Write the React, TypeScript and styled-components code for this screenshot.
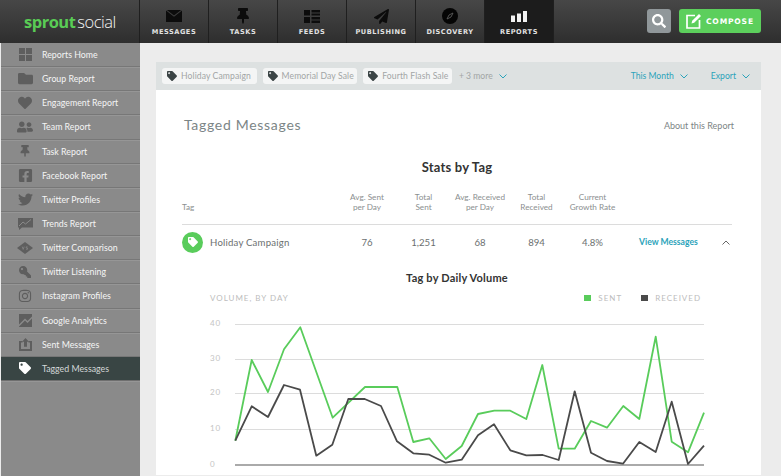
import { ReactNode } from "react";
import styled, { createGlobalStyle } from "styled-components";
import {
  FaFolder,
  FaHeart,
  FaUserFriends,
  FaThumbtack,
  FaFacebookSquare,
  FaTwitter,
  FaKey,
  FaInstagram,
  FaTag,
  FaPaperPlane,
  FaSearch,
} from "react-icons/fa";

const GlobalStyle = createGlobalStyle`
  html, body {
    margin: 0;
    padding: 0;
    background: #ececec;
    overflow: hidden;
  }
  * { box-sizing: border-box; }
`;

const Page = styled.div`
  width: 781px;
  height: 476px;
  display: flex;
  flex-direction: column;
  overflow: hidden;
  background: #ececec;
  font-family: Lato, "Liberation Sans", sans-serif;
`;

/* ---------- top bar ---------- */
const TopBar = styled.header`
  flex: 0 0 43px;
  display: flex;
  align-items: stretch;
  background: linear-gradient(#474747, #2e2e2e);
`;

const Logo = styled.div`
  width: 140px;
  padding: 0 0 1px 24px;
  display: flex;
  align-items: center;
  font-family: "Open Sans", sans-serif;
  font-size: 16.5px;
  letter-spacing: -0.5px;
  color: #f4f4f4;
  font-weight: 300;
  border-right: 1px solid #1f1f1f;
  b {
    color: #59cc55;
    font-weight: 700;
    margin-right: 2px;
  }
`;

const NavItem = styled.div<{ $active?: boolean }>`
  width: 69px;
  display: flex;
  flex-direction: column;
  align-items: center;
  gap: 3px;
  padding-top: 7px;
  border-right: 1px solid #1f1f1f;
  background: ${(p) => (p.$active ? "#1c1c1c" : "transparent")};
  color: #0c0c0c;
`;

const NavIcon = styled.span`
  height: 18px;
  display: flex;
  align-items: center;
  svg { display: block; }
`;

const NavLabel = styled.span`
  font-family: "DejaVu Sans", sans-serif;
  font-weight: 700;
  font-size: 6.6px;
  line-height: 8px;
  letter-spacing: 0.55px;
  color: #e2e2e2;
`;

const TopActions = styled.div`
  margin-left: auto;
  padding: 9px 20px 0 0;
  display: flex;
  align-items: flex-start;
  gap: 8px;
`;

const SearchButton = styled.div`
  width: 24px;
  height: 24px;
  border-radius: 3px;
  background: #90979a;
  color: #fff;
  display: flex;
  align-items: center;
  justify-content: center;
`;

const ComposeButton = styled.div`
  width: 82px;
  height: 24px;
  border-radius: 3px;
  background: #5ccf5c;
  color: #fff;
  display: flex;
  align-items: center;
  gap: 4px;
  padding-left: 7px;
  font-family: "DejaVu Sans", sans-serif;
  font-weight: 700;
  font-size: 7.6px;
  letter-spacing: 0.8px;
`;

/* ---------- sidebar ---------- */
const Body = styled.div`
  flex: 1;
  display: flex;
  min-height: 0;
`;

const Sidebar = styled.nav`
  width: 139px;
  margin-left: 1px;
  background: #8a8a8a;
  display: grid;
  grid-auto-rows: 24.15px;
`;

const SideRow = styled.div<{ $active?: boolean }>`
  display: flex;
  align-items: center;
  padding-left: 15px;
  gap: 8px;
  font-size: 8.8px;
  color: ${(p) => (p.$active ? "#d4d8d8" : "#f5f5f5")};
  background: ${(p) => (p.$active ? "#394544" : "transparent")};
  border-bottom: 1px solid ${(p) => (p.$active ? "#6f6f6f" : "#777")};
  box-shadow: 0 1px 0 #969696;
`;

const SideIcon = styled.span<{ $active?: boolean }>`
  width: 18px;
  height: 16px;
  display: flex;
  align-items: center;
  justify-content: center;
  color: ${(p) => (p.$active ? "#fff" : "#5e5e5e")};
`;

const FlippedKey = styled(FaKey)`
  transform: scaleX(-1);
`;

/* ---------- main ---------- */
const Main = styled.main`
  flex: 1;
  min-width: 0;
  padding: 19px 20px 1px 16px;
  display: flex;
  flex-direction: column;
`;

const FilterBar = styled.div`
  flex: 0 0 28px;
  background: #dde1e1;
  display: flex;
  align-items: center;
  padding: 0 11px 0 6px;
  font-size: 8.6px;
  white-space: nowrap;
`;

const TagChip = styled.span<{ $w: number }>`
  width: ${(p) => p.$w}px;
  height: 16px;
  margin-right: 6px;
  border-radius: 3px;
  background: #f4f5f5;
  color: #a2a5a5;
  display: flex;
  align-items: center;
  gap: 4px;
  padding-left: 5px;
  letter-spacing: 0.1px;
  svg { color: #3b4445; flex: none; }
`;

const MoreText = styled.span`
  color: #a2a5a5;
  margin-left: 1px;
`;

const FilterLink = styled.span<{ $gap: number }>`
  color: #2ba3ba;
  display: flex;
  align-items: center;
  gap: 6px;
  margin-left: ${(p) => p.$gap}px;
`;

const Panel = styled.section`
  flex: 1;
  background: #fff;
  min-height: 0;
  padding: 0 29px 0 26px;
  display: flex;
  flex-direction: column;
`;

const TitleRow = styled.div`
  display: flex;
  justify-content: space-between;
  align-items: center;
  height: 20px;
  margin-top: 25px;
  padding-left: 2px;
`;

const PageTitle = styled.h1`
  margin: 0;
  font-size: 14px;
  line-height: 18px;
  font-weight: 400;
  letter-spacing: 0.7px;
  color: #7b8586;
`;

const AboutLink = styled.span`
  font-size: 9px;
  color: #7d8585;
  margin-right: -2px;
`;

const Heading = styled.h2<{ $size: number; $top: number }>`
  margin: ${(p) => p.$top}px 0 0;
  text-align: center;
  font-size: ${(p) => p.$size}px;
  line-height: 14px;
  font-weight: 700;
  letter-spacing: 0.2px;
  color: #333;
`;

const TableGrid = styled.div`
  display: grid;
  grid-template-columns: 158px 54px 59px 54px 59px 53px 1fr;
  align-items: center;
`;

const HeadRow = styled(TableGrid)`
  margin-top: 15px;
  height: 23px;
  align-items: end;
  padding-bottom: 12px;
  border-bottom: 1px solid #dcdcdc;
  box-sizing: content-box;
  font-size: 8.2px;
  line-height: 10px;
  color: #8b8f8f;
  text-align: center;
  span:first-child { text-align: left; }
`;

const DataRow = styled(TableGrid)`
  height: 35px;
  padding-bottom: 1px;
  font-size: 9.6px;
  color: #6b6f6f;
  text-align: center;
`;

const TagCell = styled.div`
  display: flex;
  align-items: center;
  gap: 7px;
  text-align: left;
  letter-spacing: 0.2px;
`;

const TagBadge = styled.span`
  width: 21px;
  height: 21px;
  border-radius: 50%;
  background: #59cc5b;
  color: #fff;
  display: flex;
  align-items: center;
  justify-content: center;
`;

const ActionCell = styled.div`
  display: flex;
  align-items: center;
  justify-content: space-between;
  padding: 0 2px 0 20px;
  color: #2ba3ba;
  font-size: 8.6px;
  font-weight: 700;
`;

const ChartHead = styled.div`
  display: flex;
  align-items: center;
  justify-content: space-between;
  margin-top: 6px;
  height: 14px;
  padding: 0 31px 0 28px;
  font-size: 8px;
  letter-spacing: 1px;
  color: #bdbdbd;
`;

const Legend = styled.div`
  display: flex;
  align-items: center;
`;

const Swatch = styled.i<{ $color: string }>`
  width: 7px;
  height: 6px;
  margin-right: 7px;
  background: ${(p) => p.$color};
`;

const LegendLabel = styled.span`
  margin-right: 19px;
  &:last-child { margin-right: 0; }
`;

const ChartSvg = styled.svg`
  display: block;
  margin-top: 8px;
  overflow: visible;
  font-family: Lato, sans-serif;
`;

/* ---------- drawings ---------- */
const GridIcon = () => (
  <svg width="13" height="13" viewBox="0 0 13 13" fill="currentColor">
    <rect width="6" height="6" />
    <rect x="7" width="6" height="6" />
    <rect y="7" width="6" height="6" />
    <rect x="7" y="7" width="6" height="6" />
  </svg>
);

const TrendIcon = () => (
  <svg width="15" height="13" viewBox="0 0 15 13" fill="currentColor">
    <path d="M0 1h15v9.500H4L1 13v-2.500H0z" />
    <path d="M1 9l4-4 2.500 2L13 2.500" fill="none" stroke="#8a8a8a" strokeWidth="1" />
  </svg>
);

const VsIcon = () => (
  <svg width="16" height="12" viewBox="0 0 16 12" fill="currentColor">
    <path d="M8 0l8 6-8 6-8-6z" />
    <path d="M5.200 4.600l1 2.800 1-2.800M10.500 4.800H9.200v1.200h1.300v1.300H9" fill="none" stroke="#8a8a8a" strokeWidth=".7" />
  </svg>
);

const AnalyticsIcon = () => (
  <svg width="13" height="13" viewBox="0 0 13 13" fill="currentColor">
    <path d="M0 0h13v2.500L8.500 7 6 4.500 0 10.500zM0 13v-.5l6-6 2.500 2.500L13 4.500V13z" />
  </svg>
);

const UploadIcon = () => (
  <svg width="13" height="13" viewBox="0 0 13 13" fill="currentColor">
    <path d="M0 3h3.500v1.500H2V11h9V4.500H9.500V3H13v10H0z" />
    <path d="M6.500 0L10 3.700H8v5H5v-5H3z" />
  </svg>
);

const EnvelopeIcon = () => (
  <svg width="16" height="12" viewBox="0 0 16 12" fill="currentColor">
    <path d="M0 .5l8 6.200L16 .5V12H0z" />
    <path d="M.8 0h14.400L8 5.500z" />
  </svg>
);

const FeedsIcon = () => (
  <svg width="16" height="13" viewBox="0 0 16 13" fill="currentColor">
    <rect width="6" height="5.500" />
    <rect y="7" width="6" height="6" />
    <rect x="7.500" width="8.500" height="2.500" />
    <rect x="7.500" y="3.500" width="8.500" height="2" />
    <rect x="7.500" y="7" width="8.500" height="2.500" />
    <rect x="7.500" y="10.500" width="8.500" height="2.500" />
  </svg>
);

const CompassIcon = () => (
  <svg width="16" height="16" viewBox="0 0 16 16">
    <circle cx="8" cy="8" r="8" fill="#050505" />
    <path d="M11 5L9 9 5 11l2-4z" fill="none" stroke="#5a5a5a" strokeWidth=".9" />
  </svg>
);

const BarsIcon = () => (
  <svg width="16" height="11" viewBox="0 0 16 11" fill="#f2f2f2">
    <rect y="4.500" width="4" height="6.500" />
    <rect x="6" y="2.500" width="4" height="8.500" />
    <rect x="12" width="4" height="11" />
  </svg>
);

const ComposeIcon = () => (
  <svg width="16" height="16" viewBox="0 0 16 16" fill="none" stroke="#fff" strokeWidth="1.700">
    <path d="M9 2.500H1v12.500h12.500V7" />
    <path d="M5.500 10.500l.7-2.700L13 1l2 2-6.800 6.800z" fill="#fff" stroke="none" />
  </svg>
);

const Chevron = ({ up, color = "#2ba3ba" }: { up?: boolean; color?: string }) => (
  <svg width="8" height="5" viewBox="0 0 8 5" fill="none" stroke={color} strokeWidth="1">
    <path d={up ? "M.5 4.500L4 1l3.500 3.500" : "M.5.500L4 4 7.500.500"} />
  </svg>
);

/* ---------- data ---------- */
const navItems: { label: string; icon: ReactNode; active?: boolean }[] = [
  { label: "MESSAGES", icon: <EnvelopeIcon /> },
  { label: "TASKS", icon: <FaThumbtack size={16} /> },
  { label: "FEEDS", icon: <FeedsIcon /> },
  { label: "PUBLISHING", icon: <FaPaperPlane size={15} /> },
  { label: "DISCOVERY", icon: <CompassIcon /> },
  { label: "REPORTS", icon: <BarsIcon />, active: true },
];

const sideItems: { label: string; icon: ReactNode; active?: boolean }[] = [
  { label: "Reports Home", icon: <GridIcon /> },
  { label: "Group Report", icon: <FaFolder size={15} /> },
  { label: "Engagement Report", icon: <FaHeart size={14} /> },
  { label: "Team Report", icon: <FaUserFriends size={16} /> },
  { label: "Task Report", icon: <FaThumbtack size={12} /> },
  { label: "Facebook Report", icon: <FaFacebookSquare size={15} /> },
  { label: "Twitter Profiles", icon: <FaTwitter size={15} /> },
  { label: "Trends Report", icon: <TrendIcon /> },
  { label: "Twitter Comparison", icon: <VsIcon /> },
  { label: "Twitter Listening", icon: <FlippedKey size={12} /> },
  { label: "Instagram Profiles", icon: <FaInstagram size={14} /> },
  { label: "Google Analytics", icon: <AnalyticsIcon /> },
  { label: "Sent Messages", icon: <UploadIcon /> },
  { label: "Tagged Messages", icon: <FaTag size={12} />, active: true },
];

const sentLine =
  "235.3,440.7 251.7,360 268,392 284,349.3 300.3,327.3 332.7,417.7 365,387 397.3,387 413.3,442 429.3,438.3 445.7,459 461.7,446 478,414 494.3,410.7 510.3,410.7 526.3,419 542.3,365 558.7,448.7 574.7,448.7 591,421 607,427.7 623.3,406 639.3,419 655.7,336.7 671.7,441.7 688,452.3 704,412.7";
const receivedLine =
  "235.3,440.7 251.7,406.3 268,417 284,385 300,389.7 316.3,455.7 332.3,444.7 348.3,399 364.7,399 381,406 397,441.3 413.3,453.3 429.3,454.7 445.7,462.7 461.7,459.7 478,435.3 494,424.3 510.3,450.3 526.3,455.3 542.7,455 558.7,460 574.7,391.3 591,452.7 607,461 623,463.7 639.3,442 655.7,452 671.7,401.7 688,464 704,445.7";

const axis = [
  { label: "40", y: 324.5 },
  { label: "30", y: 359.5 },
  { label: "20", y: 393.5 },
  { label: "10", y: 429.5 },
];

export default function App() {
  return (
    <Page>
      <GlobalStyle />
      <TopBar>
        <Logo>
          <b>sprout</b>social
        </Logo>
        {navItems.map((n) => (
          <NavItem key={n.label} $active={n.active}>
            <NavIcon>{n.icon}</NavIcon>
            <NavLabel>{n.label}</NavLabel>
          </NavItem>
        ))}
        <TopActions>
          <SearchButton>
            <FaSearch size={14} />
          </SearchButton>
          <ComposeButton>
            <ComposeIcon />
            COMPOSE
          </ComposeButton>
        </TopActions>
      </TopBar>
      <Body>
        <Sidebar>
          {sideItems.map((s) => (
            <SideRow key={s.label} $active={s.active}>
              <SideIcon $active={s.active}>{s.icon}</SideIcon>
              {s.label}
            </SideRow>
          ))}
        </Sidebar>
        <Main>
          <FilterBar>
            <TagChip $w={96}>
              <FaTag size={10} />
              Holiday Campaign
            </TagChip>
            <TagChip $w={96}>
              <FaTag size={10} />
              Memorial Day Sale
            </TagChip>
            <TagChip $w={90}>
              <FaTag size={10} />
              Fourth Flash Sale
            </TagChip>
            <MoreText>+ 3 more</MoreText>
            <FilterLink $gap={6}>
              <Chevron />
            </FilterLink>
            <FilterLink $gap={124}>
              This Month
              <Chevron />
            </FilterLink>
            <FilterLink $gap={23}>
              Export
              <Chevron />
            </FilterLink>
          </FilterBar>
          <Panel>
            <TitleRow>
              <PageTitle>Tagged Messages</PageTitle>
              <AboutLink>About this Report</AboutLink>
            </TitleRow>
            <Heading $size={13} $top={25}>
              Stats by Tag
            </Heading>
            <HeadRow>
              <span>Tag</span>
              <span>
                Avg. Sent
                <br />
                per Day
              </span>
              <span>
                Total
                <br />
                Sent
              </span>
              <span>
                Avg. Received
                <br />
                per Day
              </span>
              <span>
                Total
                <br />
                Received
              </span>
              <span>
                Current
                <br />
                Growth Rate
              </span>
              <span />
            </HeadRow>
            <DataRow>
              <TagCell>
                <TagBadge>
                  <FaTag size={10} />
                </TagBadge>
                Holiday Campaign
              </TagCell>
              <span>76</span>
              <span>1,251</span>
              <span>68</span>
              <span>894</span>
              <span>4.8%</span>
              <ActionCell>
                View Messages
                <Chevron up color="#666" />
              </ActionCell>
            </DataRow>
            <Heading $size={11} $top={11}>
              Tag by Daily Volume
            </Heading>
            <ChartHead>
              <span>VOLUME, BY DAY</span>
              <Legend>
                <Swatch $color="#59cc5b" />
                <LegendLabel>SENT</LegendLabel>
                <Swatch $color="#4a4a4a" />
                <LegendLabel>RECEIVED</LegendLabel>
              </Legend>
            </ChartHead>
            <ChartSvg width="550" height="157" viewBox="182 313 550 157">
              {axis.map((a) => (
                <g key={a.label}>
                  <line x1="235" x2="704" y1={a.y} y2={a.y} stroke="#dcdcdc" strokeWidth="1" />
                  <text x="210" y={a.y + 1} fontSize="8" letterSpacing="0.8" fill="#c4c4c4">
                    {a.label}
                  </text>
                </g>
              ))}
              <text x="210" y="467" fontSize="8" fill="#c4c4c4">
                0
              </text>
              <line x1="235" x2="704" y1="465" y2="465" stroke="#aaa" strokeWidth="2" />
              <polyline points={sentLine} fill="none" stroke="#59cc5b" strokeWidth="1.8" strokeLinejoin="round" />
              <polyline points={receivedLine} fill="none" stroke="#4a4a4a" strokeWidth="1.8" strokeLinejoin="round" />
            </ChartSvg>
          </Panel>
        </Main>
      </Body>
    </Page>
  );
}
